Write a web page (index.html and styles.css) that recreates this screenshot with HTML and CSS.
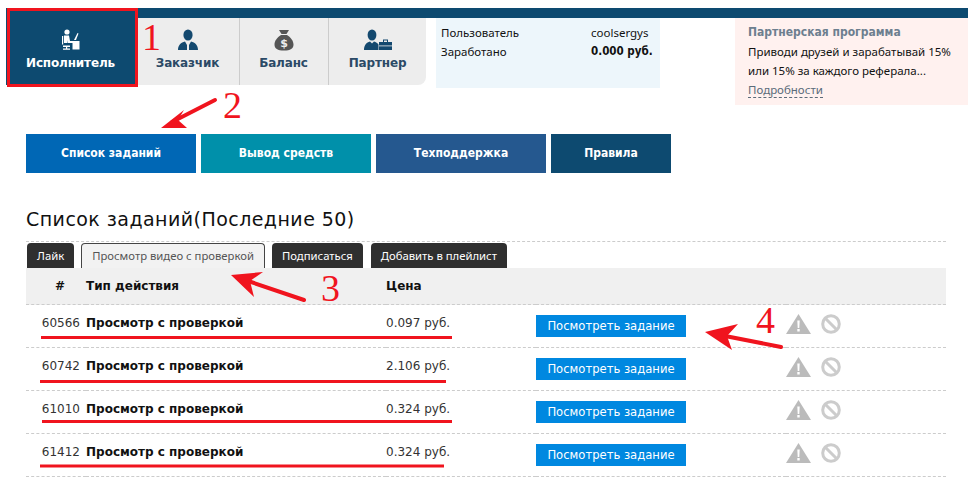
FILE: index.html
```html
<!DOCTYPE html>
<html lang="ru">
<head>
  <meta charset="UTF-8" />
  <title>Список заданий</title>
  <link rel="stylesheet" href="styles.css">
</head>
<body>

<div class="page">

  <!-- Top bar and account menu -->
  <div class="top-bar"></div>
  <div class="header">
    <div class="account-tabs">
      <a class="account-tab active">
        <svg class="tab-icon" width="20" height="22" viewBox="0 0 20 22">
          <circle cx="6" cy="3" r="2.6" fill="#fff"/>
          <path d="M3 6.5h5l1 5.5h3v2H6.5L6 11v3H3z" fill="#fff"/>
          <path d="M1 7h1.2v8.5H1z" fill="#fff"/>
          <path d="M11.5 12h7v8.5h-7z" fill="#fff"/>
          <path d="M13 11l3.5-7 1 .4-2.5 6.6z" fill="#fff"/>
          <path d="M2 16.5h7v1.4H6.2v1.6H9v1.2H2v-1.2h3v-1.6H2z" fill="#fff"/>
        </svg>
        <span>Исполнитель</span>
      </a>
      <a class="account-tab customer">
        <svg class="tab-icon" width="20" height="22" viewBox="0 0 20 22">
          <ellipse cx="10" cy="6" rx="4.6" ry="5.6" fill="#14496f"/>
          <path d="M0 21c0-5 3-7.500 7-8.500l2 3.500v5zM20 21c0-5-3-7.500-7-8.500l-2 3.500v5z" fill="#14496f"/>
        </svg>
        <span>Заказчик</span>
      </a>
      <a class="account-tab balance">
        <svg class="tab-icon" width="20" height="22" viewBox="0 0 20 22">
          <path d="M5 1h10l-2.500 4h-5zM7 6h6c4 2.500 6.500 6 6.500 9.500 0 4-3 6-9.500 6s-9.500-2-9.500-6C.500 12 3 8.500 7 6z" fill="#555"/>
          <text class="bag-sign" x="10" y="18" text-anchor="middle">$</text>
        </svg>
        <span>Баланс</span>
      </a>
      <a class="account-tab partner">
        <svg class="tab-icon" width="28" height="22" viewBox="0 0 28 22">
          <ellipse cx="8" cy="6" rx="4.400" ry="5.600" fill="#14496f"/>
          <path d="M0 21c0-5 2.500-7.500 6-8.500l2 2 2-2c2 .5 3.500 1.500 4.500 3V21z" fill="#14496f"/>
          <path d="M15 13h13v8H15z" fill="#14496f"/>
          <path d="M19 13v-2.500h5V13h-1v-1.500h-3V13z" fill="#14496f"/>
          <path d="M15 16.500h13v.8H15z" fill="#ededed"/>
        </svg>
        <span>Партнер</span>
      </a>
    </div>

    <div class="user-info">
      <div class="info-row"><span class="info-label">Пользователь</span><span>coolsergys</span></div>
      <div class="info-row"><span class="info-label">Заработано</span><b>0.000 руб.</b></div>
    </div>

    <div class="promo">
      <div class="promo-title">Партнерская программа</div>
      <div>Приводи друзей и зарабатывай 15%</div>
      <div>или 15% за каждого реферала...</div>
      <a class="promo-link">Подробности</a>
    </div>
  </div>

  <!-- Section buttons -->
  <div class="section-nav">
    <a class="section-btn tasks">Список заданий</a>
    <a class="section-btn payout">Вывод средств</a>
    <a class="section-btn support">Техподдержка</a>
    <a class="section-btn rules">Правила</a>
  </div>

  <h1>Список заданий(Последние 50)</h1>

  <!-- Task type tabs -->
  <div class="type-tabs">
    <a class="type-tab">Лайк</a>
    <a class="type-tab selected">Просмотр видео с проверкой</a>
    <a class="type-tab">Подписаться</a>
    <a class="type-tab">Добавить в плейлист</a>
  </div>

  <table class="tasks-table">
    <thead>
      <tr>
        <th class="col-id">#</th>
        <th class="col-type">Тип действия</th>
        <th class="col-price">Цена</th>
        <th class="col-action"></th>
        <th></th>
      </tr>
    </thead>
    <tbody>
      <tr>
        <td class="col-id">60566</td>
        <td class="col-type">Просмотр с проверкой</td>
        <td class="col-price">0.097 руб.</td>
        <td class="col-action"><a class="view-btn">Посмотреть задание</a></td>
        <td class="col-icons">
          <svg width="25" height="20" viewBox="0 0 25 20"><path d="M12.500 0L25 20H0z" fill="#bbb"/><path d="M11.300 6.500h2.400l-.4 7.500h-1.600zM11.300 15h2.400v2.400h-2.400z" fill="#fff"/></svg>
          <svg width="20" height="20" viewBox="0 0 20 20"><circle cx="10" cy="10" r="8.300" fill="none" stroke="#ccc" stroke-width="3"/><path d="M4.500 4.500l11 11" stroke="#ccc" stroke-width="3"/></svg>
        </td>
      </tr>
      <tr>
        <td class="col-id">60742</td>
        <td class="col-type">Просмотр с проверкой</td>
        <td class="col-price">2.106 руб.</td>
        <td class="col-action"><a class="view-btn">Посмотреть задание</a></td>
        <td class="col-icons">
          <svg width="25" height="20" viewBox="0 0 25 20"><path d="M12.500 0L25 20H0z" fill="#bbb"/><path d="M11.300 6.500h2.400l-.4 7.500h-1.600zM11.300 15h2.400v2.400h-2.400z" fill="#fff"/></svg>
          <svg width="20" height="20" viewBox="0 0 20 20"><circle cx="10" cy="10" r="8.300" fill="none" stroke="#ccc" stroke-width="3"/><path d="M4.500 4.500l11 11" stroke="#ccc" stroke-width="3"/></svg>
        </td>
      </tr>
      <tr>
        <td class="col-id">61010</td>
        <td class="col-type">Просмотр с проверкой</td>
        <td class="col-price">0.324 руб.</td>
        <td class="col-action"><a class="view-btn">Посмотреть задание</a></td>
        <td class="col-icons">
          <svg width="25" height="20" viewBox="0 0 25 20"><path d="M12.500 0L25 20H0z" fill="#bbb"/><path d="M11.300 6.500h2.400l-.4 7.500h-1.600zM11.300 15h2.400v2.400h-2.400z" fill="#fff"/></svg>
          <svg width="20" height="20" viewBox="0 0 20 20"><circle cx="10" cy="10" r="8.300" fill="none" stroke="#ccc" stroke-width="3"/><path d="M4.500 4.500l11 11" stroke="#ccc" stroke-width="3"/></svg>
        </td>
      </tr>
      <tr>
        <td class="col-id">61412</td>
        <td class="col-type">Просмотр с проверкой</td>
        <td class="col-price">0.324 руб.</td>
        <td class="col-action"><a class="view-btn">Посмотреть задание</a></td>
        <td class="col-icons">
          <svg width="25" height="20" viewBox="0 0 25 20"><path d="M12.500 0L25 20H0z" fill="#bbb"/><path d="M11.300 6.500h2.400l-.4 7.500h-1.600zM11.300 15h2.400v2.400h-2.400z" fill="#fff"/></svg>
          <svg width="20" height="20" viewBox="0 0 20 20"><circle cx="10" cy="10" r="8.300" fill="none" stroke="#ccc" stroke-width="3"/><path d="M4.500 4.500l11 11" stroke="#ccc" stroke-width="3"/></svg>
        </td>
      </tr>
    </tbody>
  </table>

</div>

<!-- Red marks drawn over the screenshot -->
<svg class="marks" width="979" height="485" viewBox="0 0 979 485">
  <rect x="8.500" y="9.500" width="128" height="76" fill="none" stroke="#f0141e" stroke-width="3"/>
  <text class="mark-number" x="142" y="50">1</text>
  <text class="mark-number" x="223" y="118">2</text>
  <text class="mark-number" x="321" y="301">3</text>
  <text class="mark-number" x="756" y="333">4</text>

  <path d="M215 100L172 122" stroke="#f0141e" stroke-width="4" stroke-linecap="round"/>
  <path d="M161 128L184 110L178 120L187 128z" fill="#f0141e"/>

  <path d="M304 300L245 280" stroke="#f0141e" stroke-width="4" stroke-linecap="round"/>
  <path d="M231 275L263 272L250 281L254 297z" fill="#f0141e"/>

  <path d="M781 347L720 335" stroke="#f0141e" stroke-width="4" stroke-linecap="round"/>
  <path d="M705 332L738 324L727 336L732 350z" fill="#f0141e"/>

  <path d="M41 337.500H452M40 381.500H446M42 421.500H452M40 466H444" stroke="#f0141e" stroke-width="3"/>
</svg>

</body>
</html>
```

FILE: styles.css
```css
body {
  margin: 0;
  background: #fff;
  font-family: "DejaVu Sans", sans-serif;
  font-size: 12px;
  color: #111;
  overflow: hidden;
}

.page {
  padding: 8px 11px 0 6px;
}

.top-bar {
  height: 10px;
  background: #0d4a70;
}

.header {
  display: flex;
  align-items: flex-start;
  font-family: "Noto Sans", sans-serif;
  font-size: 11.500px;
  white-space: nowrap;
}

/* Account menu */
.account-tabs {
  display: flex;
  width: 420px;
  height: 67px;
  background: #ededed;
  border-radius: 0 0 8px 0;
}

.account-tab {
  display: flex;
  flex-direction: column;
  align-items: center;
  box-sizing: border-box;
  height: 67px;
  padding-top: 11px;
  font-family: "DejaVu Sans", sans-serif;
  font-size: 12px;
  font-weight: bold;
  letter-spacing: -0.15px;
  color: #2b4a66;
  border-right: 1px solid #ccc;
}

.account-tab span {
  margin-top: 5px;
}

.account-tab.active {
  width: 132px;
  height: 77px;
  margin-top: -10px;
  padding: 21px 3px 0 0;
  background: #0d4a70;
  color: #fff;
  border-right: none;
}

.account-tab.customer {
  width: 102px;
  padding-right: 2px;
}

.account-tab.balance {
  width: 89px;
  padding-right: 1px;
}

.account-tab.partner {
  width: 97px;
  border-right: none;
}

.bag-sign {
  font-family: "DejaVu Sans", sans-serif;
  font-size: 11px;
  font-weight: bold;
  fill: #ededed;
}

/* User info and promo blocks */
.user-info {
  box-sizing: border-box;
  width: 224px;
  height: 70px;
  margin-left: 10px;
  padding: 5px;
  background: #edf6fb;
  line-height: 19px;
}

.info-row {
  display: flex;
}

.info-label {
  flex: none;
  width: 150px;
}

.info-row b {
  font-family: "DejaVu Sans Condensed", "DejaVu Sans", sans-serif;
  font-size: 11.500px;
}

.promo {
  box-sizing: border-box;
  width: 233px;
  height: 87px;
  margin-left: 75px;
  padding: 5px 13px;
  background: #fff1ef;
  line-height: 19px;
}

.promo-title {
  font-family: "DejaVu Sans Condensed", "DejaVu Sans", sans-serif;
  font-size: 12px;
  font-weight: bold;
  color: #6d7f8f;
}

.promo-link {
  color: #5a6b7a;
  border-bottom: 1px dashed #5a6b7a;
}

/* Section buttons */
.section-nav {
  display: flex;
  gap: 5px;
  margin: 29px 0 0 20px;
}

.section-btn {
  width: 170px;
  height: 39px;
  line-height: 39px;
  text-align: center;
  font-family: "DejaVu Sans Condensed", "DejaVu Sans", sans-serif;
  font-weight: bold;
  font-size: 12px;
  color: #fff;
}

.section-btn.tasks {
  background: #0067b5;
}

.section-btn.payout {
  background: #0090aa;
}

.section-btn.support {
  background: #25588f;
}

.section-btn.rules {
  width: 120px;
  background: #0d4a70;
}

h1 {
  margin: 33px 22px 0 20px;
  padding-bottom: 9px;
  border-bottom: 1px dashed #ccc;
  font-size: 19px;
  font-weight: normal;
  line-height: 26px;
  letter-spacing: 0.45px;
}

/* Task type tabs */
.type-tabs {
  display: flex;
  gap: 8px;
  margin: 1px 0 0 21px;
  font-family: "Noto Sans", sans-serif;
  font-size: 11.300px;
}

.type-tab {
  box-sizing: border-box;
  height: 25px;
  padding: 0 10px;
  line-height: 25px;
  background: #2f2f2f;
  color: #fff;
  border-radius: 4px 4px 0 0;
}

.type-tab.selected {
  margin: 0 -1px;
  background: #f2f2f2;
  color: #555;
  border: 1px solid #444;
  border-bottom: none;
  line-height: 24px;
}

/* Tasks table */
.tasks-table {
  width: 920px;
  margin-left: 20px;
  border-collapse: collapse;
  table-layout: fixed;
}

.tasks-table th {
  height: 36px;
  padding: 0;
  background: #f0f0f0;
  text-align: left;
  font-size: 12px;
  border-bottom: 1px dashed #ccc;
}

.tasks-table td {
  height: 43px;
  padding: 0 0 7px;
  box-sizing: border-box;
  border-bottom: 1px dashed #ccc;
}

.tasks-table td.col-action {
  padding: 0;
}

.tasks-table td.col-icons {
  padding: 0 0 5px;
}

.col-id {
  width: 60px;
  text-align: right;
  padding-right: 6px !important;
  box-sizing: border-box;
}

td.col-id,
td.col-price {
  color: #333;
}

th.col-id {
  padding-right: 21px !important;
  text-align: right !important;
}

.col-type {
  width: 300px;
}

td.col-type {
  font-weight: bold;
}

.col-price {
  width: 150px;
}

.col-action {
  width: 250px;
}

.view-btn {
  display: block;
  width: 150px;
  height: 22px;
  line-height: 22px;
  text-align: center;
  font-size: 11.600px;
  color: #fff;
  background: #0088e0;
}

.col-icons {
  white-space: nowrap;
}

.col-icons svg {
  vertical-align: middle;
  margin-right: 6px;
}

/* Hand-drawn annotations */
.marks {
  position: absolute;
  top: 0;
  left: 0;
  pointer-events: none;
}

.mark-number {
  font-family: "Liberation Serif", serif;
  font-size: 38px;
  fill: #f0141e;
}
```
